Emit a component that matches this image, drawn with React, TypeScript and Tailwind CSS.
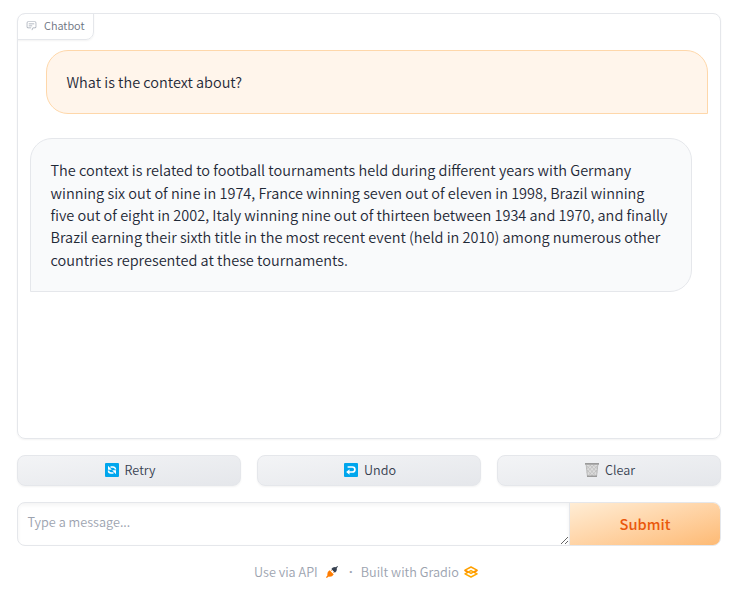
import type { ReactNode } from "react";

const ANSWER = [
  "The context is related to football tournaments held during different years with Germany",
  "winning six out of nine in 1974, France winning seven out of eleven in 1998, Brazil winning",
  "five out of eight in 2002, Italy winning nine out of thirteen between 1934 and 1970, and finally",
  "Brazil earning their sixth title in the most recent event (held in 2010) among numerous other",
  "countries represented at these tournaments.",
];

function ChatIcon() {
  return (
    <svg viewBox="0 0 32 32" className="h-[11px] w-[11px]" fill="currentColor">
      <path d="M17.74 30L16 29l4-7h6a2 2 0 0 0 2-2V8a2 2 0 0 0-2-2H6a2 2 0 0 0-2 2v12a2 2 0 0 0 2 2h9v2H6a4 4 0 0 1-4-4V8a4 4 0 0 1 4-4h20a4 4 0 0 1 4 4v12a4 4 0 0 1-4 4h-4.84Z" />
      <path d="M8 10h16v2H8zm0 6h10v2H8z" />
    </svg>
  );
}

function RetryIcon() {
  return (
    <svg viewBox="0 0 14 14" className="h-[14px] w-[14px]">
      <rect width="14" height="14" rx="1" fill="#00a6ed" />
      <g fill="none" stroke="#fff" strokeWidth="1.5">
        <path d="M5.500 4H8a2.500 2.500 0 0 1 2.500 2.500" />
        <path d="M8.500 10H6a2.500 2.500 0 0 1-2.500-2.500" />
      </g>
      <path d="M3 2.700v4h3.800zM11 11.300v-4H7.200z" fill="#fff" />
    </svg>
  );
}

function UndoIcon() {
  return (
    <svg viewBox="0 0 14 14" className="h-[14px] w-[14px]">
      <rect width="14" height="14" rx="1" fill="#00a6ed" />
      <path d="M3.600 4h4.800a2.500 2.500 0 0 1 0 5H5" fill="none" stroke="#fff" strokeWidth="1.7" />
      <path d="M2.200 9l3.300-2.700v5.400z" fill="#fff" />
    </svg>
  );
}

function TrashIcon() {
  return (
    <svg viewBox="0 0 14 14" className="h-[14px] w-[14px]">
      <path d="M1 1.5h12l-1.2 12H2.2z" fill="#dcdcdc" />
      <path
        d="M2 3l8.6 9.5M5 2l7 7.5M8.5 2l4 4M2 7l5.5 6M12 3l-8.600 9.500M9 2L2 9.500M5.500 2l-4 4M12 7l-5.500 6"
        stroke="#b4b4b4"
        strokeWidth=".6"
      />
      <path d="M1.200 2l1.200 11M12.800 2l-1.200 11" stroke="#b0b0b0" strokeWidth=".8" />
      <path d="M0 0h14v1.800H0zM2 12.600h10V14H2z" fill="#9b9b9b" />
    </svg>
  );
}

function ApiIcon() {
  return (
    <svg viewBox="0 0 12 12" className="h-[12px] w-[12px]">
      <path d="M5.300 3.100l1.600-1.600 2.100-.4.900.2L11.300 0l.7.700-1.300 1.400.2.900-.4 2.100-1.600 1.600z" fill="#374151" />
      <path d="M3.600 4.300l4.100 4.100-1.700 1.800-2.200.5-1-.2L.7 12 0 11.300l1.500-2.100-.2-1 .5-2.200z" fill="#ff7c00" />
      <path d="M4.600 5.300l1.200-1.200M6.700 7.400l1.200-1.200" stroke="#ff7c00" strokeWidth=".8" />
    </svg>
  );
}

function GradioIcon() {
  return (
    <svg viewBox="0 0 14 12" className="h-[12px] w-[14px]" fill="none" strokeLinejoin="round">
      <path d="M1 4.200L7 1l6 3.200L7 7.400z" stroke="#ffa000" strokeWidth="1.500" />
      <path d="M1 7.800L7 4.600l6 3.200L7 11z" stroke="#ffa800" strokeWidth="1.500" />
      <path d="M1 4.200v.6l3 1.600M13 4.200v.6l-3 1.600" stroke="#ff8a00" strokeWidth="1.300" />
    </svg>
  );
}

function ActionButton({ icon, label }: { icon: ReactNode; label: string }) {
  return (
    <button className="flex h-[31px] flex-1 items-center justify-center gap-[6px] rounded-lg border border-gray-200 bg-linear-to-br from-[#f3f4f6] to-[#e5e7eb] pl-[2px] text-[12.600px] leading-[18px] font-[350] text-[#374151] shadow-[0_1px_2px_rgba(0,0,0,0.05)]">
      <span className="-mt-px">{icon}</span>
      <span className="-mt-px">{label}</span>
    </button>
  );
}

export default function App() {
  return (
    <div className="flex h-[590px] w-[747px] flex-col bg-white pt-[13px] pr-[26px] pl-[17px] font-['Noto_Sans_CJK_SC',sans-serif] font-[350] text-[#1f2937]">
      <section className="flex h-[426px] flex-col overflow-hidden rounded-lg border border-[#e5e7eb] shadow-[0_1px_2px_rgba(0,0,0,0.05)]">
        <div className="-mt-px -ml-px flex h-[27px] w-[77px] items-center gap-[7px] rounded-tl-lg rounded-br-lg border border-[#e5e7eb] pb-[2px] pl-2 text-[10.900px] text-[#6b7280] shadow-[0_1px_2px_rgba(0,0,0,0.05)]">
          <span className="text-[#9ca3af]"><ChatIcon /></span>
          <span>Chatbot</span>
        </div>
        <div className="flex flex-col gap-6 pt-[10px] pr-3 pl-3">
          <div className="ml-4 h-16 w-[662px] rounded-t-[22px] rounded-bl-[22px] border border-[#fed7aa] bg-[#fff5eb] pt-5 pl-[19.500px] text-[14.480px] leading-[22.500px]">
            What is the context about?
          </div>
          <div className="h-[154px] w-[662px] rounded-t-[22px] rounded-br-[22px] border border-[#e5e7eb] bg-[#f9fafb] pt-[20.250px] pl-[19.500px] text-[14.500px] leading-[22.400px]">
            {ANSWER.map((line) => (
              <div key={line} className="whitespace-nowrap">{line}</div>
            ))}
          </div>
        </div>
      </section>
      <div className="mt-4 flex gap-4">
        <ActionButton icon={<RetryIcon />} label="Retry" />
        <ActionButton icon={<UndoIcon />} label="Undo" />
        <ActionButton icon={<TrashIcon />} label="Clear" />
      </div>
      <div className="mt-4 flex h-[44px] overflow-hidden rounded-lg border border-[#e5e7eb]">
        <textarea
          placeholder="Type a message..."
          className="h-[42px] w-[551px] resize overflow-hidden px-[9.500px] pt-[9px] text-[12.700px] leading-[20px] shadow-[inset_0_2px_4px_rgba(0,0,0,0.05)] outline-none placeholder:text-[#9ca3af]"
        />
        <button className="flex-1 border-l border-[#e5e7eb] bg-linear-to-br from-[#ffedd5] to-[#fdba74] text-[14.600px] font-medium text-[#ea580c]">
          Submit
        </button>
      </div>
      <footer className="mt-4 flex h-5 items-center pl-[237px] text-[12.700px] text-[#9ca3af]">
        <span>Use via API</span>
        <span className="ml-2"><ApiIcon /></span>
        <span className="ml-[11px] w-1 text-center font-['Open_Sans',sans-serif] font-bold">·</span>
        <span className="ml-2">Built with Gradio</span>
        <span className="ml-[5px]"><GradioIcon /></span>
      </footer>
    </div>
  );
}
